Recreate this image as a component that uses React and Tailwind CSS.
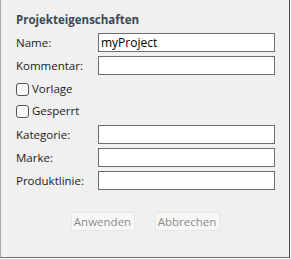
export default function App() {
  const field = (label, value = '', cls = 'mt-[4px]') => (
    <div className={`flex h-[19px] items-center ${cls}`}>
      <span className="w-[82px] text-[#1b1b1b]">{label}</span>
      <div className="flex h-[19px] w-[177px] items-center border border-[#6d6d6d] bg-white px-[2px] text-[12px] text-black">
        {value}
      </div>
    </div>
  );

  const check = (label) => (
    <label className="flex h-[22px] items-center gap-[3px] text-[#1b1b1b]">
      <span className="h-[13px] w-[13px] rounded-[3px] border border-[#555] bg-[#fafafa]" />
      {label}
    </label>
  );

  return (
    <div
      className="flex h-[258px] w-[290px] flex-col border-b border-l border-r border-b-[#6e6e6e] border-l-[#a9a9a9] border-r-[#4f4f4f] bg-[#f0f0f0] pl-[15px] text-[11.5px] leading-none"
      style={{ fontFamily: '"Open Sans", "Noto Sans", sans-serif' }}
    >
      <div className="mt-[12px] flex h-[16px] items-center text-[11.5px] font-bold text-[#3d4756]">
        Projekteigenschaften
      </div>
      {field('Name:', 'myProject', 'mt-[5px]')}
      {field('Kommentar:')}
      <div className="mt-[3px]">
        {check('Vorlage')}
        {check('Gesperrt')}
      </div>
      {field('Kategorie:', '', 'mt-[3px]')}
      {field('Marke:')}
      {field('Produktlinie:')}
      <div className="mt-[22px] -ml-[15px] flex justify-center gap-[20px]">
        <button
          type="button"
          className="h-[19px] w-[64px] rounded-[2px] border border-[#e6e6e6] bg-[#f7f7f7] text-[#8b8b8b]"
        >
          Anwenden
        </button>
        <button
          type="button"
          className="h-[19px] w-[65px] rounded-[2px] border border-[#e6e6e6] bg-[#f7f7f7] text-[#8b8b8b]"
        >
          Abbrechen
        </button>
      </div>
    </div>
  );
}
